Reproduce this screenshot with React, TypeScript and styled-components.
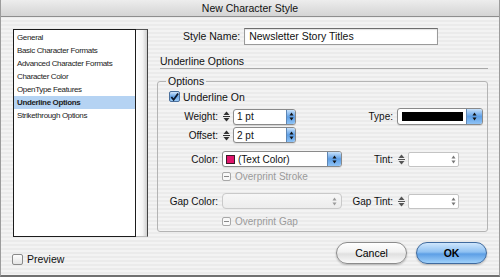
import React from 'react'
import styled, { createGlobalStyle } from 'styled-components'

const GlobalStyle = createGlobalStyle`
  html, body {
    margin: 0;
    padding: 0;
    background: #ececec;
  }
  * {
    box-sizing: border-box;
  }
`

const Window = styled.div`
  width: 500px;
  height: 277px;
  display: flex;
  flex-direction: column;
  border-left: 1px solid #9c9c9c;
  border-right: 1px solid #9c9c9c;
  border-bottom: 2px solid #707070;
  background: repeating-linear-gradient(
    to bottom,
    #ebebeb 0px,
    #ebebeb 2px,
    #f3f3f3 2px,
    #f3f3f3 4px
  );
  font-family: 'Liberation Sans', Arial, sans-serif;
  font-size: 10px;
  color: #111;
  overflow: hidden;
`

const TitleBar = styled.div`
  height: 17px;
  flex-shrink: 0;
  display: flex;
  align-items: center;
  justify-content: center;
  background: linear-gradient(to bottom, #ededed, #d4d4d4);
  border-bottom: 1px solid #8e8e8e;
  border-top-left-radius: 4px;
  border-top-right-radius: 4px;
  font-size: 10.5px;
  color: #111;
`

const Body = styled.div`
  display: flex;
  padding: 12px 0 0 12px;
  height: 220px;
  flex-shrink: 0;
`

const ListPane = styled.div`
  width: 135px;
  height: 208px;
  display: flex;
`

const List = styled.div`
  flex: 1;
  background: #fff;
  border: 1.5px solid #1c1c1c;
  padding-top: 1px;
`

const ListItem = styled.div<{ $selected?: boolean }>`
  height: 13px;
  line-height: 13px;
  padding-left: 3px;
  font-size: 8px;
  letter-spacing: -0.35px;
  color: #222;
  white-space: nowrap;
  background: ${p => (p.$selected ? '#b5d3f3' : 'transparent')};
  font-weight: ${p => (p.$selected ? 'bold' : 'normal')};
`

const Track = styled.div`
  width: 12px;
  background: linear-gradient(to right, #ffffff, #f4f4f4 60%, #cfcfcf);
  border-top: 1px solid #555;
  border-right: 1px solid #444;
  border-bottom: 1px solid #bbb;
`

const Right = styled.div`
  margin-left: 9px;
  width: 331px;
  display: flex;
  flex-direction: column;
`

const StyleRow = styled.div`
  display: flex;
  align-items: center;
  padding-left: 26px;
  gap: 4px;
  height: 16px;
  margin-top: -1px;
`

const TextInput = styled.div`
  width: 194px;
  height: 17px;
  background: #fff;
  border: 1px solid #9a9a9a;
  border-top-color: #6e6e6e;
  box-shadow: inset 0 1px 1px rgba(0, 0, 0, 0.12);
  padding-left: 4px;
  display: flex;
  align-items: center;
  font-size: 10.5px;
`

const Heading = styled.div`
  margin-top: 11px;
  margin-left: 3px;
  height: 14px;
  border-bottom: 1px solid #a8a8a8;
  font-size: 10.5px;
  line-height: 12px;
`

const Group = styled.fieldset`
  margin: 6px 0 0 0;
  padding: 0;
  height: 157px;
  border: 1px solid #b4b4b4;
  border-radius: 3px;
`

const Legend = styled.legend`
  margin-left: 8px;
  padding: 0 2px;
  font-size: 10.5px;
  line-height: 12px;
`

const Row = styled.div<{ $mt: number; $h: number }>`
  display: grid;
  grid-template-columns: 60px 120px 47px 86px;
  column-gap: 4px;
  align-items: center;
  margin-top: ${p => p.$mt}px;
  height: ${p => p.$h}px;
`

const Label = styled.span<{ $big?: boolean }>`
  text-align: right;
  white-space: nowrap;
  font-size: ${p => (p.$big ? '10.5px' : '10px')};
`

const CheckRow = styled.div`
  display: flex;
  align-items: center;
  gap: 3px;
  padding-left: 11px;
  margin-top: 3px;
  height: 13px;
  font-size: 10.5px;
`

const AquaCheck = styled.span`
  width: 11px;
  height: 11px;
  border-radius: 2px;
  border: 1px solid #4a6f9c;
  background: linear-gradient(to bottom, #cfe5fb, #6aa7e8 50%, #9ccaf5);
  display: flex;
  align-items: center;
  justify-content: center;
`

const Control = styled.div`
  display: flex;
  align-items: center;
  gap: 2px;
`

const Combo = styled.div<{ $w: number; $h: number }>`
  width: ${p => p.$w}px;
  height: ${p => p.$h}px;
  display: flex;
  align-items: stretch;
  background: #fff;
  border: 1px solid #8a8a8a;
  border-radius: 3px;
  overflow: hidden;
  box-shadow: 0 1px 1px rgba(0, 0, 0, 0.1);
`

const ComboText = styled.span`
  flex: 1;
  display: flex;
  align-items: center;
  gap: 3px;
  padding-left: 3px;
  font-size: 10px;
  white-space: nowrap;
`

const BlueEnd = styled.span<{ $w: number }>`
  width: ${p => p.$w}px;
  flex-shrink: 0;
  display: flex;
  align-items: center;
  justify-content: center;
  background: linear-gradient(to bottom, #c7e1fb, #5e9fe6 50%, #8fc3f5);
  border-left: 1px solid #5f86b3;
`

const BlackBar = styled.span`
  flex: 1;
  margin: 3px 3px 3px 4px;
  background: #000;
`

const Swatch = styled.span`
  width: 9px;
  height: 9px;
  background: #e0156c;
  border: 1px solid #3a1a26;
`

const TintField = styled.div`
  width: 51px;
  height: 15px;
  background: #fff;
  border: 1px solid #c4c4c4;
  border-radius: 2px;
  display: flex;
  justify-content: flex-end;
  align-items: center;
  padding-right: 2px;
`

const DisabledCombo = styled.div`
  width: 120px;
  height: 16px;
  border: 1px solid #c9c9c9;
  border-radius: 4px;
  background: linear-gradient(to bottom, #f7f7f7, #ececec);
  display: flex;
  justify-content: flex-end;
  align-items: center;
  padding-right: 4px;
`

const Overprint = styled.div`
  display: flex;
  align-items: center;
  gap: 4px;
  grid-column: 2 / span 2;
  color: #9a9a9a;
  font-size: 10px;
`

const MiniBox = styled.span`
  width: 9px;
  height: 9px;
  border: 1px solid #a8a8a8;
  border-radius: 2px;
  background: #f8f8f8;
  display: flex;
  align-items: center;
  justify-content: center;
  &::after {
    content: '';
    width: 5px;
    height: 1px;
    background: #888;
  }
`

const Footer = styled.div`
  flex: 1;
  display: flex;
  align-items: flex-start;
  padding: 5px 12px 0 11px;
`

const Preview = styled.label`
  display: flex;
  align-items: center;
  gap: 4px;
  margin-top: 11px;
  font-size: 10.5px;
`

const PlainBox = styled.span`
  width: 11px;
  height: 11px;
  border: 1px solid #8a8a8a;
  border-radius: 2px;
  background: linear-gradient(to bottom, #fdfdfd, #e4e4e4);
`

const Buttons = styled.div`
  margin-left: auto;
  display: flex;
  gap: 9px;
`

const Button = styled.button<{ $primary?: boolean }>`
  width: 71px;
  height: 22px;
  border-radius: 11px;
  font-family: 'Liberation Sans', Arial, sans-serif;
  font-size: 10.5px;
  color: #000;
  padding: 0;
  border: 1px solid ${p => (p.$primary ? '#3f6a9e' : '#8c8c8c')};
  font-weight: ${p => (p.$primary ? 'bold' : 'normal')};
  background: ${p =>
    p.$primary
      ? 'linear-gradient(to bottom, #cfe6fc 0%, #8fc1f2 45%, #5d9fe5 55%, #9fd0fa 100%)'
      : 'linear-gradient(to bottom, #ffffff 0%, #f1f1f1 45%, #e0e0e0 55%, #fafafa 100%)'};
  box-shadow: 0 1px 2px rgba(0, 0, 0, 0.25);
`

const SpinArrows = ({ color = '#333' }: { color?: string }) => (
  <svg width="9" height="13" viewBox="0 0 9 13">
    <path d="M1.5 5 L4.5 1.5 L7.5 5 Z" fill={color} />
    <line x1="1" y1="6.5" x2="8" y2="6.5" stroke={color} strokeWidth="1" />
    <path d="M1.5 8 L4.5 11.5 L7.5 8 Z" fill={color} />
  </svg>
)

const PopArrows = ({ color = '#111' }: { color?: string }) => (
  <svg width="5" height="9" viewBox="0 0 5 9">
    <path d="M0.5 3.5 L2.5 0.5 L4.5 3.5 Z" fill={color} />
    <path d="M0.5 5.5 L2.5 8.5 L4.5 5.5 Z" fill={color} />
  </svg>
)

const CheckMark = () => (
  <svg width="10" height="10" viewBox="0 0 10 10">
    <path d="M1.5 5 L4 8 L9 1" fill="none" stroke="#0d1a2e" strokeWidth="2" />
  </svg>
)

const items = [
  'General',
  'Basic Character Formats',
  'Advanced Character Formats',
  'Character Color',
  'OpenType Features',
  'Underline Options',
  'Strikethrough Options',
]

const App: React.FC = () => {
  return (
    <>
      <GlobalStyle />
      <Window>
        <TitleBar>New Character Style</TitleBar>
        <Body>
          <ListPane>
            <List>
              {items.map(item => (
                <ListItem key={item} $selected={item === 'Underline Options'}>
                  {item}
                </ListItem>
              ))}
            </List>
            <Track />
          </ListPane>
          <Right>
            <StyleRow>
              <Label $big>Style Name:</Label>
              <TextInput>Newsletter Story Titles</TextInput>
            </StyleRow>
            <Heading>Underline Options</Heading>
            <Group>
              <Legend>Options</Legend>
              <CheckRow>
                <AquaCheck>
                  <CheckMark />
                </AquaCheck>
                Underline On
              </CheckRow>
              <Row $mt={5} $h={16}>
                <Label>Weight:</Label>
                <Control>
                  <SpinArrows />
                  <Combo $w={63} $h={16}>
                    <ComboText>1 pt</ComboText>
                    <BlueEnd $w={9}>
                      <PopArrows />
                    </BlueEnd>
                  </Combo>
                </Control>
                <Label>Type:</Label>
                <Combo $w={86} $h={17}>
                  <BlackBar />
                  <BlueEnd $w={16}>
                    <PopArrows />
                  </BlueEnd>
                </Combo>
              </Row>
              <Row $mt={3} $h={16}>
                <Label>Offset:</Label>
                <Control>
                  <SpinArrows />
                  <Combo $w={63} $h={16}>
                    <ComboText>2 pt</ComboText>
                    <BlueEnd $w={9}>
                      <PopArrows />
                    </BlueEnd>
                  </Combo>
                </Control>
              </Row>
              <Row $mt={8} $h={16}>
                <Label>Color:</Label>
                <Combo $w={120} $h={16}>
                  <ComboText>
                    <Swatch />
                    (Text Color)
                  </ComboText>
                  <BlueEnd $w={14}>
                    <PopArrows />
                  </BlueEnd>
                </Combo>
                <Label>Tint:</Label>
                <Control>
                  <SpinArrows color="#555" />
                  <TintField>
                    <PopArrows color="#777" />
                  </TintField>
                </Control>
              </Row>
              <Row $mt={3} $h={12}>
                <Overprint>
                  <MiniBox />
                  Overprint Stroke
                </Overprint>
              </Row>
              <Row $mt={11} $h={16}>
                <Label>Gap Color:</Label>
                <DisabledCombo>
                  <PopArrows color="#9a9a9a" />
                </DisabledCombo>
                <Label>Gap Tint:</Label>
                <Control>
                  <SpinArrows color="#555" />
                  <TintField>
                    <PopArrows color="#777" />
                  </TintField>
                </Control>
              </Row>
              <Row $mt={6} $h={12}>
                <Overprint>
                  <MiniBox />
                  Overprint Gap
                </Overprint>
              </Row>
            </Group>
          </Right>
        </Body>
        <Footer>
          <Preview>
            <PlainBox />
            Preview
          </Preview>
          <Buttons>
            <Button>Cancel</Button>
            <Button $primary>OK</Button>
          </Buttons>
        </Footer>
      </Window>
    </>
  )
}

export default App
